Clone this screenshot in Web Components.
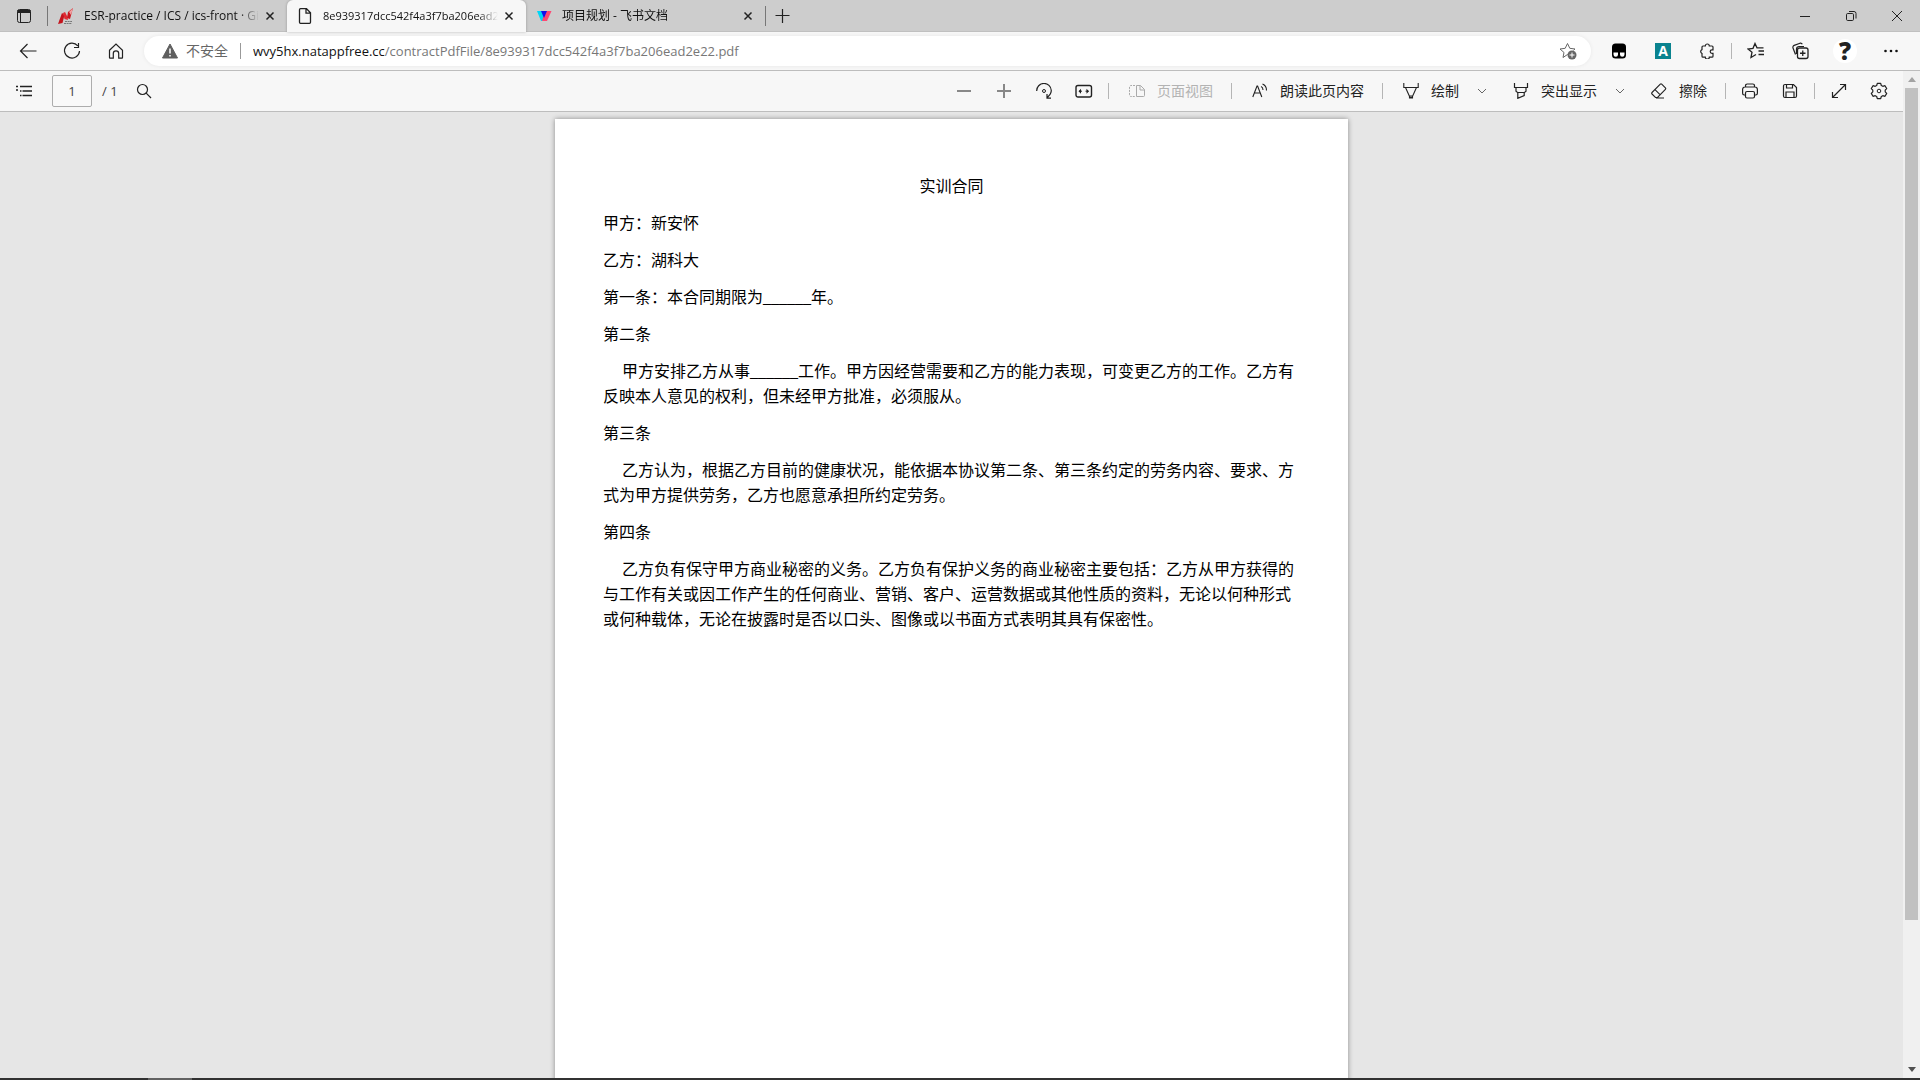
<!DOCTYPE html>
<html lang="zh-CN">
<head>
<meta charset="utf-8">
<title>8e939317dcc542f4a3f7ba206ead2e22.pdf</title>
<style>
  html, body { margin: 0; height: 100%; overflow: hidden; }
  body { font-family: "Open Sans", "Noto Sans CJK SC", sans-serif; color: #111; background: #e6e6e6; }
  .blank { font-family: "Liberation Serif", serif; line-height: 0; }
</style>
</head>
<body>
<browser-window>
  <tab-strip slot="tabs">
    <browser-tab icon="gitlab" label="ESR-practice / ICS / ics-front · GitLab"></browser-tab>
    <browser-tab icon="file" label="8e939317dcc542f4a3f7ba206ead2e22.pdf" active></browser-tab>
    <browser-tab icon="feishu" label="项目规划 - 飞书文档"></browser-tab>
  </tab-strip>
  <address-row slot="address" host="wvy5hx.natappfree.cc" path="/contractPdfFile/8e939317dcc542f4a3f7ba206ead2e22.pdf"></address-row>
  <pdf-toolbar slot="toolbar"></pdf-toolbar>
  <pdf-page heading="实训合同">
    <p>甲方：新安怀</p>
    <p>乙方：湖科大</p>
    <p>第一条：本合同期限为<span class="blank">______</span>年。</p>
    <p>第二条</p>
    <p class="body">甲方安排乙方从事<span class="blank">______</span>工作。甲方因经营需要和乙方的能力表现，可变更乙方的工作。乙方有反映本人意见的权利，但未经甲方批准，必须服从。</p>
    <p>第三条</p>
    <p class="body">乙方认为，根据乙方目前的健康状况，能依据本协议第二条、第三条约定的劳务内容、要求、方式为甲方提供劳务，乙方也愿意承担所约定劳务。</p>
    <p>第四条</p>
    <p class="body">乙方负有保守甲方商业秘密的义务。乙方负有保护义务的商业秘密主要包括：乙方从甲方获得的与工作有关或因工作产生的任何商业、营销、客户、运营数据或其他性质的资料，无论以何种形式或何种载体，无论在披露时是否以口头、图像或以书面方式表明其具有保密性。</p>
  </pdf-page>
</browser-window>

<script>
const ICONS = {
  tabs: [16, '<rect x="1.5" y="1.5" width="13" height="13" rx="2"/><path d="M1.5 3h13M1.5 4h13" stroke-width="2"/><path d="M4.5 5v9.5"/>'],
  gitlab: [16, '<path d="M0 16L4 5l2.500 2L4.500 15z" fill="#c4141d" stroke="none"/><path d="M5 5l2-1 2.500 5 .5 3-3.500-1z" fill="#e02b33" stroke="none"/><path d="M9 10l1-6 5-4-3 11z" fill="#c8171f" stroke="none"/><path d="M11 4l4-4-2 7z" fill="#f0a0a0" stroke="none"/><path d="M7 13.500h7M6 15.500h8" stroke="#777" stroke-dasharray="2 .6"/>'],
  file: [16, '<path d="M3.500.7h6l4 4v9.600a1 1 0 0 1-1 1h-9a1 1 0 0 1-1-1V1.700a1 1 0 0 1 1-1zM9 .7v4.500h4.500" stroke-width="1.300"/>'],
  feishu: [16, '<path d="M1 3h6l4 0-4 10H5z" fill="#00d6f7" stroke="none"/><path d="M9 3h6.500L11 13H6z" fill="#ff4772" stroke="none"/><path d="M5 3h6L8 10z" fill="#1410e8" stroke="none"/>'],
  close: [10, '<path d="M1.500 1.500l7 7M8.500 1.500l-7 7" stroke-width="1.500"/>'],
  plus: [16, '<path d="M7.500 1v14M.5 7.500h14" stroke-width="1.200"/>'],
  min: [12, '<path d="M1 6.500h10"/>'],
  restore: [12, '<rect x="1.500" y="3.500" width="7" height="7" rx="1.200"/><path d="M4 1.500h5a2 2 0 0 1 2 2v5"/>'],
  wclose: [12, '<path d="M1 1l10 10M11 1L1 11"/>'],
  back: [18, '<path d="M17.500 9H1.500M8.500 2L1.500 9l7 7" stroke-width="1.200"/>'],
  reload: [18, '<path d="M14.800 3.800A7.500 7.500 0 1 0 16.500 9M15.500 1v4.500H11" stroke-width="1.200"/>'],
  home: [16, '<path d="M1.500 7.200L8 1l6.500 6.200v7.300a.7.7 0 0 1-.7.7h-3.100v-4.600a2.700 2.700 0 0 0-5.400 0v4.600H2.200a.7.700 0 0 1-.7-.7z" stroke-width="1.200"/>'],
  warning: [16, '<path d="M8 1l7.500 14H.5z" fill="#5f5f5f" stroke="#5f5f5f" stroke-linejoin="round"/><path d="M8 5.500v5M8 12v1.600" stroke="#fff" stroke-width="1.500"/>'],
  staradd: [18, '<path d="M10.500 13.500L8.500 12.500 4 15.500 5 10.500 1 7l5.200-.7L8.500 1.500l2.300 4.800L16 7l-1.500 1.300" stroke="#666"/><circle cx="13" cy="13" r="4.500" fill="#666" stroke="none"/><path d="M13 10.500v5M10.500 13h5" stroke="#fff"/>'],
  panda: [16, '<rect x="1" y=".5" width="14" height="15" rx="3.500" fill="#000" stroke="none"/><path d="M2.500 9.500h4.500v2a2.200 2.200 0 0 1-4.500 0zM9 9.500h4.500v2a2.200 2.200 0 0 1-4.500 0z" fill="#fff" stroke="none"/>'],
  puzzle: [16, '<path d="M4 3h2.300a2 2 0 0 1 4 0h2.700a1 1 0 0 1 1 1v2.800h-1a1.800 1.800 0 0 0 0 3.600h1v2.800a1 1 0 0 1-1 1h-2.700a2 2 0 0 1-4 0H4a1 1 0 0 1-1-1v-2.700a2.100 2.100 0 0 1 0-3.900V4a1 1 0 0 1 1-1z" stroke-width="1.200"/>'],
  starlist: [18, '<path d="M9 12.500L4 15.500l1-5.300L1 7l5-.7L8 1.500l2 4.300h6.500M11.500 9h5.500M11.500 12.500h5.500" stroke-width="1.300"/>'],
  collections: [18, '<path d="M4.500 12.500L2 6A2 2 0 0 1 3.200 3.400L9 1.200a2 2 0 0 1 2.300 1.100M5.500 12V7a2.500 2.500 0 0 1 2.500-2.500h5" stroke-width="1.200"/><rect x="6.500" y="6" width="10.500" height="10.500" rx="2" stroke-width="1.300"/><path d="M11.750 8.500v5.500M9 11.250h5.500" stroke-width="1.300"/>'],
  dots: [16, '<g fill="#111" stroke="none"><circle cx="2.500" cy="8" r="1.300"/><circle cx="8" cy="8" r="1.300"/><circle cx="13.500" cy="8" r="1.300"/></g>'],
  list: [16, '<path d="M4 3.500h12M6.500 8h9.500M6.500 12.500h9.500M0 3.500h2M0 7h2M4 8h1.500M4 12.500h1.500" stroke-width="1.300"/>'],
  search: [16, '<circle cx="6.500" cy="6.500" r="5" stroke-width="1.200"/><path d="M10.200 10.200l4.800 4.800" stroke-width="1.200"/>'],
  zoomout: [16, '<path d="M1 8h14" stroke="#888" stroke-width="2"/>'],
  zoomin: [16, '<path d="M1 8h14M8 1v14" stroke="#888" stroke-width="2"/>'],
  rotate: [16, '<path d="M.7 8A7.300 7.300 0 0 1 15.300 7.500c0 3-1.800 5-4 7M11 11v4.200h4" stroke-width="1.200"/><circle cx="8" cy="8" r="1.500"/>'],
  fit: [18, '<rect x="1" y="3.500" width="15.500" height="11.500" rx="2" stroke-width="1.400"/><path d="M4 9.200h3M10.500 9.200h3"/><path d="M3.500 9.200L6 6.700v5zM14 9.200l-2.500-2.500v5z" fill="#222" stroke="none"/>'],
  pageview: [16, '<path d="M7.500 2.500h4l4 4v6a1 1 0 0 1-1 1h-7zM11 2.500v4.500h4.500" stroke="#aaa"/><path d="M6 2.500H2a1.500 1.500 0 0 0-1.500 1.500v8A1.500 1.500 0 0 0 2 13.500h4" stroke="#aaa" stroke-dasharray="2 1"/>'],
  read: [16, '<path d="M.8 14L5 3h.6l4.200 11M2.300 10h6M9 3.500c1.500.5 2 2 2 3.500M10.500 1c2.700 1 4 3.500 4 6.500" stroke-width="1.100"/>'],
  draw: [16, '<path d="M.8 0v4.500h14.400V0M2.500 4.500L7 14.500h2l4.500-10M6.500 13h3v2h-3z" stroke-width="1.100"/>'],
  highlight: [16, '<path d="M1.500 0v4.500h13V0M3 4.500v3.800l1.500 1.200h7L13 8.300V4.500M4.800 9.500v5.800l6.400-2.800v-3" stroke-width="1.200"/>'],
  chevron: [10, '<path d="M1 3l4 4 4-4" stroke="#666"/>'],
  eraser: [16, '<path d="M1 9.500L9.300 1.200a1 1 0 0 1 1.400 0l3.700 3.700a1 1 0 0 1 0 1.400L6.500 14.500h-2L1 11a1 1 0 0 1 0-1.500zM4 6.700l5 5M5 15h8" stroke-width="1.100"/>'],
  print: [16, '<path d="M3.500 4V2.700A1.700 1.700 0 0 1 5.200 1h5.600a1.700 1.700 0 0 1 1.700 1.700V4M3.500 12H2.200A1.700 1.700 0 0 1 .6 10.300V6.500A2.400 2.400 0 0 1 3 4h10a2.400 2.400 0 0 1 2.400 2.400v3.900a1.700 1.700 0 0 1-1.700 1.700h-1.200" stroke-width="1.200"/><rect x="3.500" y="8.500" width="9" height="6.500" rx="1.500" stroke-width="1.200"/>'],
  save: [16, '<path d="M3 1.500h8.500l3 3V13a1.500 1.500 0 0 1-1.500 1.500H3A1.500 1.500 0 0 1 1.500 13V3A1.500 1.500 0 0 1 3 1.500zM4.500 1.500V5h6V1.500M4 14.500V9h8v5.500" stroke-width="1.200"/>'],
  expand: [16, '<path d="M1.500 14.500l13-13M9 1.500h5.500V7M1.500 9v5.500H7" stroke-width="1.200"/>'],
  gear: [18, '<path d="M7.300 1.300h3.400l.6 2.200 1.500.8 2.200-.6 1.700 2.900L15.200 8.200v1.600l1.500 1.600-1.700 2.900-2.200-.6-1.500.8-.6 2.200H7.300l-.6-2.200-1.500-.8-2.200.6-1.700-2.900 1.500-1.600V8.200L1.300 6.600 3 3.700l2.200.6 1.500-.8z" stroke-width="1.200" stroke-linejoin="round"/><circle cx="9" cy="9" r="1.800"/>']
};

const define = (name, render) => customElements.define(name, class extends HTMLElement {
  connectedCallback() {
    if (this.shadowRoot) return;
    const root = this.attachShadow({ mode: 'open' });
    const template = document.createElement('template');
    template.innerHTML = render(this);
    root.append(template.content.cloneNode(true));
  }
});

define('ui-icon', el => {
  const [size, shape] = ICONS[el.getAttribute('name')];
  return `<style>:host{display:block;flex:none} svg{display:block;fill:none;stroke:#222;stroke-width:1}</style>
    <svg width="${size}" height="${size}" viewBox="0 0 ${size} ${size}" aria-hidden="true">${shape}</svg>`;
});

/* Square or labelled button; the slot takes anything richer than an icon. */
define('ui-button', el => {
  const label = el.getAttribute('label'), text = el.getAttribute('text'), icon = el.getAttribute('icon');
  return `<style>
    :host{display:flex;flex:none;width:var(--w,40px)}
    :host([text]){width:auto}
    button{flex:1;display:flex;align-items:center;justify-content:center;gap:12px;margin:0;padding:0;border:0;background:none;
      font:inherit;font-size:14px;line-height:20px;color:#222;white-space:nowrap}
    :host([text]) button{padding:0 14px 0 16px}
    :host([split]) button{padding-right:8px}
    button:disabled{color:#b3b3b3}
  </style><button type="button" ${label ? `aria-label="${label}"` : ''} ${el.hasAttribute('disabled') ? 'disabled' : ''}>
    ${icon ? `<ui-icon name="${icon}"></ui-icon>` : ''}${text ? `<span>${text}</span>` : ''}<slot></slot></button>`;
});

define('ui-divider', () => `<style>:host{display:block;flex:none;align-self:center;width:1px;height:16px;margin:0 4px;background:#b5b5b5}</style>`);

define('browser-tab', el => `<style>
    :host{display:flex;flex:0 1 239px;min-width:0;align-items:center;box-sizing:border-box;padding:0 12px 0 10px;font-size:12px}
    :host([active]){background:#f7f7f7;border-radius:6px 6px 0 0;box-shadow:0 0 3px #0004;z-index:1;font-size:11px}
    .label{flex:1;min-width:0;margin:0 6px 0 10px;overflow:hidden;white-space:nowrap;line-height:18px;
      mask-image:linear-gradient(to right,#000 calc(100% - 20px),transparent)}
  </style>
  <ui-icon name="${el.getAttribute('icon')}"></ui-icon>
  <span class="label">${el.getAttribute('label')}</span>
  <ui-button style="--w:10px" icon="close" label="关闭标签页"></ui-button>`);

define('tab-strip', () => `<style>
    :host{display:flex;height:32px;background:#cdcdcd;box-shadow:inset 0 -1px #c0c0c0}
    .fill{flex:1}
    .line{align-self:center;width:1px;height:20px;background:#777}
  </style>
  <ui-button style="--w:47px" icon="tabs" label="标签操作菜单"></ui-button>
  <span class="line"></span>
  <slot></slot>
  <span class="line"></span>
  <ui-button style="--w:34px" icon="plus" label="新建标签页"></ui-button>
  <span class="fill"></span>
  <ui-button style="--w:46px" icon="min" label="最小化"></ui-button>
  <ui-button style="--w:46px" icon="restore" label="还原"></ui-button>
  <ui-button style="--w:46px" icon="wclose" label="关闭"></ui-button>`);

define('address-row', el => `<style>
    :host{display:flex;height:38px;padding:0 6px;background:#f7f7f7;border-bottom:1px solid #bdbdbd;--w:44px}
    .field{flex:1;min-width:0;display:flex;align-items:center;height:30px;margin:4px 6px;border-radius:15px;background:#fff;
      box-shadow:0 0 4px #0001;padding:0 14px 0 18px;white-space:nowrap}
    .state{margin-left:8px;font-size:14px;line-height:20px;color:#666}
    .line{width:1px;height:16px;margin:0 12px;background:#999}
    .url{flex:1;min-width:0;overflow:hidden;font-size:13px;line-height:20px;color:#111;outline:0}
    .path{color:#777}
    .letter{width:16px;height:16px;background:#0a838f;color:#fff;font-weight:700;font-size:14px;line-height:16px;text-align:center}
    .help{width:24px;height:24px;border-radius:50%;background:#fff;font-weight:800;font-size:24px;line-height:24px;text-align:center;color:#222}
  </style>
  <ui-button icon="back" label="后退"></ui-button>
  <ui-button icon="reload" label="刷新"></ui-button>
  <ui-button icon="home" label="主页"></ui-button>
  <div class="field">
    <ui-icon name="warning"></ui-icon><span class="state">不安全</span><span class="line"></span>
    <div class="url" role="textbox" aria-label="地址栏" contenteditable="true" spellcheck="false">${el.getAttribute('host')}<span class="path">${el.getAttribute('path')}</span></div>
    <ui-button style="--w:18px" icon="staradd" label="添加到收藏夹"></ui-button>
  </div>
  <ui-button icon="panda" label="脚本扩展"></ui-button>
  <ui-button label="翻译扩展"><span class="letter">A</span></ui-button>
  <ui-button icon="puzzle" label="扩展"></ui-button>
  <ui-divider style="margin:0 2px"></ui-divider>
  <ui-button icon="starlist" label="收藏夹"></ui-button>
  <ui-button icon="collections" label="集锦"></ui-button>
  <ui-button style="--w:46px" label="个人资料"><span class="help">?</span></ui-button>
  <ui-button style="--w:46px" icon="dots" label="设置及其他"></ui-button>`);

define('pdf-toolbar', () => `<style>
    :host{display:flex;height:40px;padding-right:4px;background:#f7f7f7;border-bottom:1px solid #bdbdbd;font-size:13px}
    .pages{display:flex;align-items:center;gap:10px;margin:0 4px;color:#444}
    input{box-sizing:border-box;width:40px;height:32px;margin:0;padding:0;border:1px solid #adadad;border-radius:2px;background:#f9f9f9;
      font:inherit;color:#444;text-align:center}
    .fill{flex:1}
  </style>
  <ui-button style="--w:48px" icon="list" label="目录"></ui-button>
  <label class="pages"><input type="text" value="1" aria-label="页码"><span>/ 1</span></label>
  <ui-button style="--w:44px" icon="search" label="查找"></ui-button>
  <span class="fill"></span>
  <ui-button icon="zoomout" label="缩小"></ui-button>
  <ui-button icon="zoomin" label="放大"></ui-button>
  <ui-button icon="rotate" label="旋转"></ui-button>
  <ui-button icon="fit" label="适合宽度"></ui-button>
  <ui-divider></ui-divider>
  <ui-button icon="pageview" text="页面视图" disabled></ui-button>
  <ui-divider></ui-divider>
  <ui-button icon="read" text="朗读此页内容"></ui-button>
  <ui-divider></ui-divider>
  <ui-button icon="draw" text="绘制" split></ui-button>
  <ui-button style="--w:30px" icon="chevron" label="绘制选项"></ui-button>
  <ui-button icon="highlight" text="突出显示" split></ui-button>
  <ui-button style="--w:30px" icon="chevron" label="突出显示选项"></ui-button>
  <ui-button icon="eraser" text="擦除"></ui-button>
  <ui-divider></ui-divider>
  <ui-button icon="print" label="打印"></ui-button>
  <ui-button icon="save" label="保存"></ui-button>
  <ui-divider></ui-divider>
  <ui-button icon="expand" label="全屏"></ui-button>
  <ui-button icon="gear" label="设置"></ui-button>`);

define('pdf-page', el => `<style>
    :host{display:block;box-sizing:border-box;width:793px;min-height:1122px;margin:7px auto 0;padding:54px 48px;background:#fff;
      box-shadow:0 0 5px #0006;color:#000;font-family:"Noto Sans CJK SC",sans-serif;font-size:16px;line-height:25px;text-spacing-trim:space-all}
    h1{margin:0 0 12px;font:inherit;text-align:center}
    ::slotted(p){margin:0 0 12px}
    ::slotted(p.body){text-indent:19px}
  </style><h1>${el.getAttribute('heading')}</h1><slot></slot>`);

define('scroll-bar', () => `<style>
    :host{display:flex;flex-direction:column;flex:none;align-items:center;width:17px;background:#f0f0f0}
    .cap{display:flex;align-items:center;height:17px}
    .thumb{flex:832;width:13px;background:#c1c1c1}
    .rest{flex:141}
    svg{display:block}
  </style>
  <span class="cap"><svg width="8" height="5"><path d="M0 5h8L4 0z" fill="#a3a3a3"/></svg></span>
  <span class="thumb"></span><span class="rest"></span>
  <span class="cap"><svg width="8" height="5"><path d="M0 0h8L4 5z" fill="#505050"/></svg></span>`);

define('task-bar', () => `<style>
    :host{display:flex;flex:none;height:2px;background:#323232;padding-left:148px}
    i{width:44px;background:#626262}
  </style><i></i>`);

define('browser-window', () => `<style>
    :host{display:flex;flex-direction:column;height:100vh}
    .content{flex:1;min-height:0;display:flex}
    .viewer{flex:1;min-width:0;display:flex;flex-direction:column}
    main{flex:1;min-height:0;overflow:hidden;display:flow-root;background:#e6e6e6}
  </style>
  <slot name="tabs"></slot>
  <slot name="address"></slot>
  <div class="content">
    <div class="viewer"><slot name="toolbar"></slot><main><slot></slot></main></div>
    <scroll-bar></scroll-bar>
  </div>
  <task-bar></task-bar>`);
</script>
</body>
</html>
